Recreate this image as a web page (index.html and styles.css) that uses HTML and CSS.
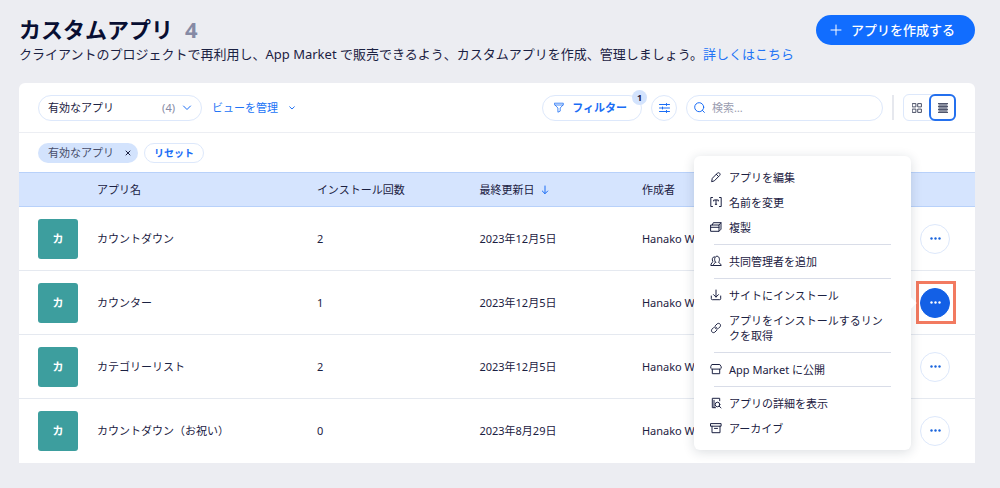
FILE: index.html
```html
<!DOCTYPE html>
<html lang="ja">
<head>
<meta charset="utf-8">
<title>カスタムアプリ</title>
<meta name="viewport" content="width=device-width, initial-scale=1">
<link rel="stylesheet" href="styles.css">
</head>
<body>
<main class="page">
  <header class="page-header">
    <div class="page-heading">
      <h1 class="page-title">カスタムアプリ <span class="page-count">4</span></h1>
      <p class="page-subtitle">クライアントのプロジェクトで再利用し、App Market で販売できるよう、カスタムアプリを作成、管理しましょう。<a class="link" href="#">詳しくはこちら</a></p>
    </div>
    <button class="create-button" type="button">
      <svg class="icon" width="12" height="12" viewBox="0 0 12 12"><path d="M6 1v10M1 6h10"/></svg>
      アプリを作成する
    </button>
  </header>

  <section class="card">
    <div class="toolbar">
      <div class="view-select">
        <select class="view-select-input" aria-label="ビュー"><option>有効なアプリ</option></select>
        <span class="view-select-count">(4)</span>
        <svg class="icon icon-blue" width="10" height="6" viewBox="0 0 10 6"><path d="M1.500 1 5 4.500 8.500 1"/></svg>
      </div>
      <button class="manage-views" type="button">ビューを管理
        <svg class="icon" width="6" height="4" viewBox="0 0 6 4"><path d="M.7.800 3 3 5.300.8"/></svg>
      </button>
      <div class="toolbar-end">
        <button class="filter-button" type="button">
          <svg class="icon icon-thin" width="10" height="11" viewBox="0 0 10 11"><path d="M.7 1.200h8.600v1.500L6.200 6v3.100L3.900 10.200V6L.7 2.700zM1 3h8"/></svg>
          フィルター
          <span class="filter-badge">1</span>
        </button>
        <button class="round-button" type="button" aria-label="列をカスタマイズ">
          <svg class="icon" width="11" height="10" viewBox="0 0 11 10"><path d="M.5 1.500h10M.5 5h10M.5 8.500h10M7.500.5v2M3.500 4v2M7.500 7.500v2"/></svg>
        </button>
        <label class="search">
          <svg class="icon icon-blue" width="11" height="11" viewBox="0 0 11 11"><circle cx="5.200" cy="5.200" r="4.500"/><path d="m8.400 8.400 2 2"/></svg>
          <input class="search-input" type="search" placeholder="検索…" aria-label="検索">
        </label>
        <span class="toolbar-divider"></span>
        <div class="layout-toggle">
          <button class="layout-option" type="button" aria-label="グリッド表示" aria-pressed="false">
            <svg class="icon" width="10" height="10" viewBox="0 0 10 10"><path d="M.6.600h3.300v3.300H.6zM6.100.600h3.300v3.300H6.100zM.6 6.100h3.300v3.300H.6zM6.100 6.100h3.300v3.300H6.100z"/></svg>
          </button>
          <button class="layout-option is-active" type="button" aria-label="リスト表示" aria-pressed="true">
            <svg width="10" height="10" viewBox="0 0 10 10"><path fill="#8a8f9f" d="M.5 0h9v10h-9z"/><path stroke="#50566c" d="M0 .5h10M0 3.500h10M0 6.500h10M0 9.500h10"/></svg>
          </button>
        </div>
      </div>
    </div>

    <div class="filter-tags">
      <span class="tag">有効なアプリ
        <button class="tag-remove" type="button" aria-label="フィルターを削除"><svg class="icon" width="6" height="6" viewBox="0 0 6 6"><path d="m1 1 4 4M5 1 1 5"/></svg></button>
      </span>
      <button class="reset-button" type="button">リセット</button>
    </div>

    <table class="app-table">
      <colgroup>
        <col class="col-icon"><col class="col-name"><col class="col-installs"><col class="col-updated"><col><col class="col-actions">
      </colgroup>
      <thead>
        <tr>
          <th></th>
          <th scope="col">アプリ名</th>
          <th scope="col">インストール回数</th>
          <th scope="col"><span class="sorted">最終更新日
            <svg class="icon" width="8" height="10" viewBox="0 0 8 10"><path d="M4 1v7.500M1.300 6 4 8.700 6.700 6"/></svg></span></th>
          <th scope="col">作成者</th>
          <th></th>
        </tr>
      </thead>
      <tbody>
        <tr>
          <td><span class="app-icon">カ</span></td>
          <td>カウントダウン</td><td>2</td><td>2023年12月5日</td><td>Hanako W</td>
          <td><button class="more-button" type="button" aria-label="その他のアクション"><svg class="dots" width="11" height="3" viewBox="0 0 11 3"><circle cx="1.500" cy="1.500" r="1.200"/><circle cx="5.500" cy="1.500" r="1.200"/><circle cx="9.500" cy="1.500" r="1.200"/></svg></button></td>
        </tr>
        <tr>
          <td><span class="app-icon">カ</span></td>
          <td>カウンター</td><td>1</td><td>2023年12月5日</td><td>Hanako W</td>
          <td>
            <div class="menu-anchor">
              <button class="more-button is-open" type="button" aria-label="その他のアクション" aria-expanded="true"><svg class="dots" width="11" height="3" viewBox="0 0 11 3"><circle cx="1.500" cy="1.500" r="1.200"/><circle cx="5.500" cy="1.500" r="1.200"/><circle cx="9.500" cy="1.500" r="1.200"/></svg></button>
              <span class="highlight"></span>
              <div class="menu" role="menu">
                <button class="menu-item" type="button" role="menuitem">
                  <svg class="icon" width="12" height="12" viewBox="0 0 12 12"><path d="m1.700 10.300.6-3 5-5.100c.8-.7 1.700-.6 2.300 0 .7.700.7 1.600 0 2.300l-5 5.100zM6.300 3.300l2.300 2.300"/></svg>アプリを編集</button>
                <button class="menu-item" type="button" role="menuitem">
                  <svg class="icon" width="12" height="12" viewBox="0 0 12 12"><path d="M2.500 1.500H.8v9h1.700M9.500 1.500h1.700v9H9.500M3.700 5V4h4.600v1M6 4v4.300M5.300 8.300h1.400"/></svg>名前を変更</button>
                <button class="menu-item" type="button" role="menuitem">
                  <svg class="icon" width="12" height="12" viewBox="0 0 12 12"><path d="M1 4h8v6.300H1zM1 6.300h8M2.300 4l1-2.300H11v6.500L9 10.300M9 4l2-2.300"/></svg>複製</button>
                <hr class="menu-divider">
                <button class="menu-item" type="button" role="menuitem">
                  <svg class="icon" width="12" height="12" viewBox="0 0 12 12"><path d="M5.500 7.200C3.900 5.800 4.300 1.200 7 1.200s3.100 4.600 1.500 6c0 1 2.700 1.200 2.700 3.300H3.300c0-2.100 2.200-2.300 2.200-3.300zM4.500 1.800C2.300 1.600 1.700 4.600 2.800 6.500 2.800 7.400.8 8.200.8 10.500h2.500"/></svg>共同管理者を追加</button>
                <hr class="menu-divider">
                <button class="menu-item" type="button" role="menuitem">
                  <svg class="icon" width="12" height="12" viewBox="0 0 12 12"><path d="M6 1v7M3.500 5.600 6 8.100l2.500-2.500M1.300 7v2.700q0 1 1 1h7.400q1 0 1-1V7"/></svg>サイトにインストール</button>
                <button class="menu-item" type="button" role="menuitem">
                  <svg class="icon" width="12" height="12" viewBox="0 0 12 12"><path d="m5.400 3.600 1.700-1.700c2-1.700 4.600.9 2.900 2.900L8.300 6.500C7.300 7.400 5.900 7.200 5.200 6.200M6.600 8.400l-1.700 1.700C2.900 11.800.3 9.200 2 7.200l1.700-1.700c1-.9 2.400-.7 3.100.3"/></svg>アプリをインストールするリンクを取得</button>
                <hr class="menu-divider">
                <button class="menu-item" type="button" role="menuitem">
                  <svg class="icon" width="12" height="12" viewBox="0 0 12 12"><path d="M2.200 1.500h7.600l1.400 2.200v1.600q-.6 1-1.700.8H2.500Q1.400 6.300.8 5.300V3.700zM2.300 6.200v4.500h7.400V6.200"/></svg>App Market に公開</button>
                <hr class="menu-divider">
                <button class="menu-item" type="button" role="menuitem">
                  <svg class="icon" width="12" height="12" viewBox="0 0 12 12"><path d="M5.500 10.700H2.300V1.300h7.400v2.500M4 10.500V3.300"/><circle cx="7.500" cy="7.500" r="2.300"/><path d="m9.200 9.200 1.800 1.700"/></svg>アプリの詳細を表示</button>
                <button class="menu-item" type="button" role="menuitem">
                  <svg class="icon" width="12" height="12" viewBox="0 0 12 12"><path d="M.9 1.600h10.200v2.600H.9zM2 4.200v6.500h8V4.200M4.500 6.400h3"/></svg>アーカイブ</button>
              </div>
            </div>
          </td>
        </tr>
        <tr>
          <td><span class="app-icon">カ</span></td>
          <td>カテゴリーリスト</td><td>2</td><td>2023年12月5日</td><td>Hanako W</td>
          <td><button class="more-button" type="button" aria-label="その他のアクション"><svg class="dots" width="11" height="3" viewBox="0 0 11 3"><circle cx="1.500" cy="1.500" r="1.200"/><circle cx="5.500" cy="1.500" r="1.200"/><circle cx="9.500" cy="1.500" r="1.200"/></svg></button></td>
        </tr>
        <tr>
          <td><span class="app-icon">カ</span></td>
          <td>カウントダウン（お祝い）</td><td>0</td><td>2023年8月29日</td><td>Hanako W</td>
          <td><button class="more-button" type="button" aria-label="その他のアクション"><svg class="dots" width="11" height="3" viewBox="0 0 11 3"><circle cx="1.500" cy="1.500" r="1.200"/><circle cx="5.500" cy="1.500" r="1.200"/><circle cx="9.500" cy="1.500" r="1.200"/></svg></button></td>
        </tr>
      </tbody>
    </table>
  </section>
</main>
</body>
</html>
```
FILE: styles.css
```css
* { box-sizing: border-box; }

body {
  margin: 0;
  background: #ecedf2;
  color: #1b2142;
  font-family: "Noto Sans", "Noto Sans CJK JP", sans-serif;
  font-size: 11px;
  line-height: 15px;
}

button, input, select {
  margin: 0;
  padding: 0;
  border: 0;
  background: none;
  color: inherit;
  font: inherit;
}

button { cursor: pointer; }

.icon {
  flex: none;
  fill: none;
  stroke: currentColor;
  stroke-width: 1;
  stroke-linecap: round;
  stroke-linejoin: round;
}

.icon-thin { stroke-width: 0.8; }
.icon-blue { color: #1a6df5; }
.link { color: #2173f6; text-decoration: none; }

.page { padding: 14px 25px 26px 19px; }

.page-header {
  display: flex;
  justify-content: space-between;
  align-items: flex-start;
  gap: 16px;
  padding-bottom: 19px;
}

.page-title {
  display: flex;
  gap: 12px;
  margin: 0;
  font-size: 22px;
  line-height: 30px;
  font-weight: 700;
  color: #080f33;
}

.page-count { color: #868aa5; }

.page-subtitle {
  margin: 0;
  font-size: 13px;
  line-height: 20px;
}

.create-button {
  flex: none;
  display: flex;
  align-items: center;
  gap: 9px;
  height: 30px;
  margin-top: 1px;
  padding: 0 20px 0 14px;
  border-radius: 15px;
  background: #116dff;
  color: #fff;
  font-size: 13px;
  font-weight: 500;
}

.card {
  background: #fff;
  border-radius: 6px 6px 0 0;
}

.toolbar {
  display: flex;
  align-items: center;
  gap: 10px;
  height: 50px;
  padding: 0 19px;
  border-bottom: 1px solid #eceef3;
}

.view-select {
  display: flex;
  align-items: center;
  gap: 7px;
  width: 164px;
  height: 26px;
  padding: 0 9px;
  border: 1px solid #dde8fb;
  border-radius: 13px;
}

.view-select-input {
  flex: 1;
  min-width: 0;
  appearance: none;
  outline: 0;
}

.view-select-count { color: #868aa5; }

.manage-views {
  display: flex;
  align-items: center;
  gap: 11px;
  color: #2173f6;
}

.toolbar-end {
  display: flex;
  align-items: center;
  gap: 9px;
  margin-left: auto;
}

.filter-button {
  position: relative;
  display: flex;
  align-items: center;
  gap: 8px;
  height: 26px;
  padding: 0 14px 0 11px;
  border: 1px solid #dde8fb;
  border-radius: 13px;
  color: #1a6df5;
  font-weight: 700;
}

.filter-badge {
  position: absolute;
  top: -6px;
  right: -6px;
  width: 15px;
  height: 15px;
  border-radius: 50%;
  background: #d3e3fd;
  color: #1b2142;
  font-size: 9px;
  text-align: center;
}

.round-button {
  display: grid;
  place-items: center;
  width: 26px;
  height: 26px;
  border: 1px solid #dde8fb;
  border-radius: 50%;
  color: #1a6df5;
}

.search {
  display: flex;
  align-items: center;
  gap: 7px;
  width: 197px;
  height: 26px;
  padding: 0 7px;
  border: 1px solid #dde8fb;
  border-radius: 13px;
}

.search-input { flex: 1; min-width: 0; outline: 0; }
.search-input::placeholder { color: #9a9db0; opacity: 1; }

.toolbar-divider {
  width: 2px;
  height: 25px;
  background: #e6e8ee;
}

.layout-toggle {
  display: flex;
  height: 27px;
  border: 1px solid #dde8fb;
  border-radius: 6px;
}

.layout-option {
  display: grid;
  place-items: center;
  width: 26px;
  color: #4a5066;
}

.layout-option.is-active {
  width: 27px;
  margin: -1px;
  border: 2px solid #2470ee;
  border-radius: 6px;
}

.filter-tags {
  display: flex;
  align-items: center;
  gap: 6px;
  height: 39px;
  padding: 0 19px;
}

.tag {
  display: flex;
  align-items: center;
  gap: 11px;
  height: 20px;
  padding: 0 7px 0 10px;
  border-radius: 10px;
  background: #d3e3fd;
  color: #484e6b;
}

.tag-remove { display: flex; color: #1b2142; }

.reset-button {
  height: 20px;
  padding: 0 9px;
  border: 1px solid #dde8fb;
  border-radius: 10px;
  color: #1a6df5;
  font-size: 10px;
  line-height: 18px;
  font-weight: 700;
}

.app-table {
  width: 100%;
  table-layout: fixed;
  border-collapse: collapse;
}

.col-icon { width: 78px; }
.col-name { width: 23%; }
.col-installs, .col-updated { width: 17%; }
.col-actions { width: 55px; }

.app-table th {
  height: 34px;
  padding: 0;
  border-top: 1px solid #b8d1fa;
  border-bottom: 1px solid #b8d1fa;
  background: #d5e4fe;
  text-align: left;
  font-weight: 400;
}

.app-table td {
  height: 64px;
  padding: 0;
  border-top: 1px solid #e5e9f0;
}

.app-table tr:first-child td { border-top-color: #b8d1fa; }
.app-table td:first-child { padding-left: 19px; }

.sorted {
  display: flex;
  align-items: center;
  gap: 7px;
}

.sorted .icon { color: #1a6df5; }

.app-icon {
  display: grid;
  place-items: center;
  width: 40px;
  height: 40px;
  border-radius: 3px;
  background: #3d9e9e;
  color: #fff;
  font-weight: 700;
}

.menu-anchor {
  position: relative;
  width: 30px;
  height: 30px;
}

.more-button {
  display: grid;
  place-items: center;
  width: 30px;
  height: 30px;
  border: 1px solid #dde8fb;
  border-radius: 50%;
  color: #1a64dc;
}

.more-button.is-open {
  border-color: #1360e6;
  background: #1360e6;
  color: #fff;
}

.dots { fill: currentColor; }

.highlight {
  position: absolute;
  inset: -7px -6px -6px -4px;
  border: 3px solid #f27a60;
  pointer-events: none;
}

.menu {
  position: absolute;
  top: -132px;
  right: 39px;
  width: 217px;
  padding: 9px 20px 9px 16px;
  border-radius: 6px;
  background: #fff;
  box-shadow: 0 2px 12px rgba(22, 45, 61, 0.16);
}

.menu::after {
  content: "";
  position: absolute;
  top: 143px;
  right: -4px;
  width: 8px;
  height: 8px;
  background: #fff;
  transform: rotate(45deg);
}

.menu-item {
  display: flex;
  align-items: center;
  gap: 7px;
  width: 100%;
  padding: 5px 0;
  text-align: left;
}

.menu-item:not(:last-child) { padding-right: 4px; }

.menu-divider {
  height: 1px;
  margin: 4px 0 4px 4px;
  border: 0;
  background: #d9dde8;
}
```
